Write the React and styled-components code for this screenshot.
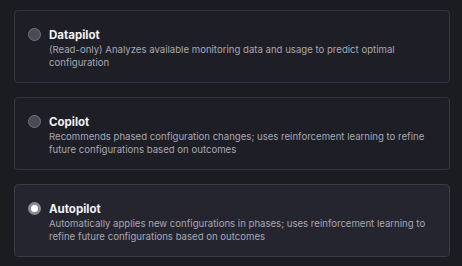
import React, { useState } from 'react';
import styled, { createGlobalStyle } from 'styled-components';

const GlobalStyle = createGlobalStyle`
  html, body {
    margin: 0;
    padding: 0;
    background: #1b1b22;
  }
  body {
    font-family: Inter, 'Noto Sans', sans-serif;
    -webkit-font-smoothing: antialiased;
  }
`;

const modes = [
  {
    id: 'datapilot',
    title: 'Datapilot',
    text: '(Read-only) Analyzes available monitoring data and usage to predict optimal configuration',
  },
  {
    id: 'copilot',
    title: 'Copilot',
    text: 'Recommends phased configuration changes; uses reinforcement learning to refine future configurations based on outcomes',
  },
  {
    id: 'autopilot',
    title: 'Autopilot',
    text: 'Automatically applies new configurations in phases; uses reinforcement learning to refine future configurations based on outcomes',
  },
];

export default function App() {
  const [mode, setMode] = useState('autopilot');

  return (
    <>
      <GlobalStyle />
      <List>
        {modes.map((m) => (
          <Card key={m.id} $active={mode === m.id} onClick={() => setMode(m.id)}>
            <Radio $active={mode === m.id} />
            <Body>
              <Title>{m.title}</Title>
              <Desc>{m.text}</Desc>
            </Body>
          </Card>
        ))}
      </List>
    </>
  );
}

const List = styled.div`
  display: flex;
  flex-direction: column;
  gap: 14px;
  padding: 10px 12px 0 14px;
`;

const Card = styled.div`
  display: flex;
  align-items: flex-start;
  gap: 8px;
  height: 73px;
  box-sizing: border-box;
  padding: 16.5px 10px 0 13px;
  border: 1px solid ${(p) => (p.$active ? '#3b3b47' : '#34343e')};
  border-radius: 4px;
  background: ${(p) => (p.$active ? '#25252f' : '#1e1e26')};
  cursor: pointer;
`;

const Radio = styled.span`
  flex: none;
  width: 13px;
  height: 13px;
  margin-top: 0.5px;
  box-sizing: border-box;
  border-radius: 50%;
  border: ${(p) => (p.$active ? '3px solid #8a8a94' : '1px solid #74747e')};
  background: ${(p) => (p.$active ? '#ffffff' : '#4a4a55')};
`;

const Body = styled.div`
  display: flex;
  flex-direction: column;
  gap: 1.5px;
`;

const Title = styled.div`
  font-size: 11.5px;
  font-weight: 700;
  line-height: 14px;
  color: #f2f2f5;
`;

const Desc = styled.div`
  font-size: 9.6px;
  line-height: 13px;
  color: #a8a8b2;
`;
